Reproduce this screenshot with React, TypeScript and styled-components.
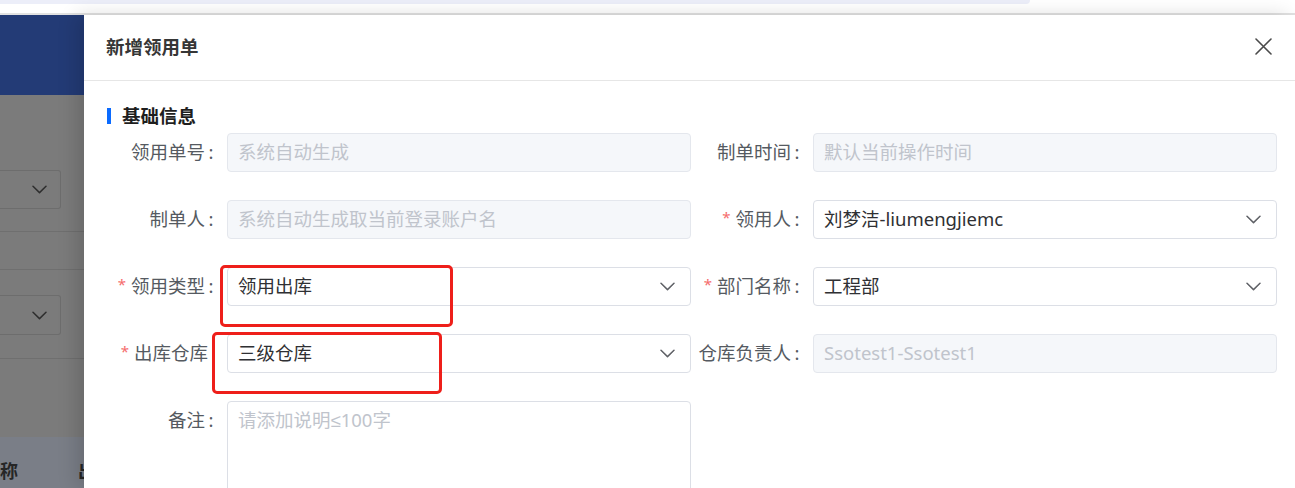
import React from "react";
import styled, { createGlobalStyle } from "styled-components";

const GlobalStyle = createGlobalStyle`
  html, body { margin: 0; padding: 0; background: #ffffff; }
  body {
    font-family: "Noto Sans", "Noto Sans CJK SC", sans-serif;
    -webkit-font-smoothing: antialiased;
  }
  * { box-sizing: border-box; }
`;

const Screen = styled.div`
  width: 1295px;
  height: 488px;
  overflow: hidden;
  display: flex;
  flex-direction: column;
  background: #ffffff;
`;

const BrowserStrip = styled.div`
  height: 15px;
  flex: none;
  background: #ffffff;
  border-bottom: 2px solid #e2e2e2;
`;

const AddressBar = styled.div`
  width: 1030px;
  height: 4px;
  background: #eceef9;
  border-bottom-right-radius: 14px;
`;

const Main = styled.div`
  flex: 1;
  display: flex;
  min-height: 0;
`;

const PageBehind = styled.div`
  width: 84px;
  flex: none;
  display: flex;
  flex-direction: column;
  background: #7b7b7b;
  overflow: hidden;
`;

const PageHeader = styled.div`
  height: 80px;
  flex: none;
  background: #233b76;
`;

const FilterSelect = styled.div<{ $top: number; $h: number }>`
  margin-top: ${(p) => p.$top}px;
  height: ${(p) => p.$h}px;
  width: 61px;
  border: 1px solid #6d6d6d;
  border-left: none;
  border-radius: 0 3px 3px 0;
  display: flex;
  align-items: center;
  justify-content: flex-end;
  padding-right: 13px;
  flex: none;
`;

const Divider = styled.div<{ $top: number }>`
  margin-top: ${(p) => p.$top}px;
  height: 1px;
  background: #6f6f6f;
  flex: none;
`;

const TableHead = styled.div`
  margin-top: 78px;
  flex: 1;
  background: #7a7e87;
  display: flex;
  align-items: flex-start;
  padding-top: 20px;
  gap: 60px;
  color: #262626;
  font-weight: 700;
  font-size: 18px;
  white-space: nowrap;
`;

const Drawer = styled.div`
  flex: 1;
  background: #ffffff;
  display: flex;
  flex-direction: column;
  box-shadow: -8px 0 18px rgba(0, 0, 0, 0.14);
  position: relative;
  z-index: 1;
`;

const DrawerHeader = styled.div`
  height: 66px;
  flex: none;
  border-bottom: 1px solid #e6e6e6;
  display: flex;
  align-items: center;
  justify-content: space-between;
  padding: 0 23px 0 22px;
`;

const Title = styled.div`
  font-size: 18.5px;
  font-weight: 700;
  color: #363636;
  margin-top: -3px;
`;

const CloseBtn = styled.button`
  border: none;
  background: transparent;
  padding: 0;
  width: 18px;
  height: 18px;
  display: flex;
  align-items: center;
  justify-content: center;
  cursor: pointer;
  margin-top: -3px;
`;

const DrawerBody = styled.div`
  position: relative;
  padding: 19px 18px 0 21px;
`;

const SectionTitle = styled.div`
  height: 30px;
  display: flex;
  align-items: center;
  gap: 11px;
  font-size: 18.5px;
  font-weight: 700;
  color: #1e1e1e;
  padding-left: 2px;
  padding-bottom: 1px;
  &::before {
    content: "";
    width: 4px;
    height: 16px;
    background: #0b6bff;
    display: block;
    margin-top: 2px;
  }
`;

const FormGrid = styled.div`
  margin-top: 3px;
  display: grid;
  grid-template-columns: 1fr 1fr;
  row-gap: 28px;
`;

const FormItem = styled.div`
  display: flex;
  align-items: flex-start;
`;

const Label = styled.label`
  width: 122px;
  flex: none;
  height: 39px;
  display: flex;
  align-items: center;
  justify-content: flex-end;
  padding-right: 10px;
  padding-bottom: 3px;
  font-size: 18.5px;
  color: #555a61;
  white-space: nowrap;
`;

const Star = styled.span`
  color: #f56c6c;
  font-size: 15px;
  margin-right: 5px;
  position: relative;
  top: -1px;
`;

const Colon = styled.span<{ $blank?: boolean }>`
  width: ${(p) => (p.$blank ? 9 : 12)}px;
  text-align: center;
  flex: none;
`;

const Field = styled.div<{ $disabled?: boolean }>`
  flex: 1;
  height: 39px;
  border: 1px solid ${(p) => (p.$disabled ? "#e4e7ed" : "#dcdfe6")};
  background: ${(p) => (p.$disabled ? "#f5f7fa" : "#ffffff")};
  border-radius: 4px;
  display: flex;
  align-items: center;
  padding: 0 15px 3px 10px;
  font-size: 18.5px;
  color: #303133;
  white-space: nowrap;
  overflow: hidden;
`;

const Placeholder = styled.span`
  color: #c0c4cc;
`;

const Symbol = styled.span`
  font-family: "Liberation Sans", sans-serif;
`;

const Value = styled.span`
  flex: 1;
  color: #2f3033;
`;

const ChevronSlot = styled.span`
  display: flex;
  align-items: center;
  padding-top: 3px;
`;

const TextArea = styled.div`
  flex: 1;
  height: 110px;
  border: 1px solid #dcdfe6;
  border-radius: 4px;
  padding: 5px 10px;
  font-size: 18.5px;
  line-height: 26px;
`;

const Annotation = styled.div<{ $left: number; $top: number; $w: number; $h: number }>`
  position: absolute;
  left: ${(p) => p.$left}px;
  top: ${(p) => p.$top}px;
  width: ${(p) => p.$w}px;
  height: ${(p) => p.$h}px;
  border: 3.5px solid #ee1f1a;
  border-radius: 5px;
  pointer-events: none;
`;

const Chevron = ({ color = "#5f6166" }: { color?: string }) => (
  <svg width="15" height="9" viewBox="0 0 15 9" fill="none">
    <path d="M1 1.2 L7.5 7.6 L14 1.2" stroke={color} strokeWidth="1.5" strokeLinecap="round" strokeLinejoin="round" />
  </svg>
);

const CloseIcon = () => (
  <svg width="17" height="17" viewBox="0 0 17 17" fill="none">
    <path d="M1 1 L16 16 M16 1 L1 16" stroke="#4a4a4a" strokeWidth="1.6" strokeLinecap="round" />
  </svg>
);

type ItemProps = {
  label: string;
  required?: boolean;
  noColon?: boolean;
  children: React.ReactNode;
};

const Item = ({ label, required, noColon, children }: ItemProps) => (
  <FormItem>
    <Label>
      {required && <Star>*</Star>}
      {label}
      <Colon $blank={noColon}>{noColon ? "" : ":"}</Colon>
    </Label>
    {children}
  </FormItem>
);

const SelectField = ({ value }: { value: string }) => (
  <Field>
    <Value>{value}</Value>
    <ChevronSlot>
      <Chevron />
    </ChevronSlot>
  </Field>
);

export default function App() {
  return (
    <>
      <GlobalStyle />
      <Screen>
        <BrowserStrip>
          <AddressBar />
        </BrowserStrip>
        <Main>
          <PageBehind>
            <PageHeader />
            <FilterSelect $top={75} $h={39}>
              <Chevron color="#2e2e2e" />
            </FilterSelect>
            <Divider $top={22} />
            <Divider $top={37} />
            <FilterSelect $top={25} $h={40}>
              <Chevron color="#2e2e2e" />
            </FilterSelect>
            <Divider $top={23} />
            <TableHead>
              <span>称</span>
              <span>出</span>
            </TableHead>
          </PageBehind>
          <Drawer>
            <DrawerHeader>
              <Title>新增领用单</Title>
              <CloseBtn aria-label="关闭">
                <CloseIcon />
              </CloseBtn>
            </DrawerHeader>
            <DrawerBody>
              <SectionTitle>基础信息</SectionTitle>
              <FormGrid>
                <Item label="领用单号">
                  <Field $disabled>
                    <Placeholder>系统自动生成</Placeholder>
                  </Field>
                </Item>
                <Item label="制单时间">
                  <Field $disabled>
                    <Placeholder>默认当前操作时间</Placeholder>
                  </Field>
                </Item>
                <Item label="制单人">
                  <Field $disabled>
                    <Placeholder>系统自动生成取当前登录账户名</Placeholder>
                  </Field>
                </Item>
                <Item label="领用人" required>
                  <SelectField value="刘梦洁-liumengjiemc" />
                </Item>
                <Item label="领用类型" required>
                  <SelectField value="领用出库" />
                </Item>
                <Item label="部门名称" required>
                  <SelectField value="工程部" />
                </Item>
                <Item label="出库仓库" required noColon>
                  <SelectField value="三级仓库" />
                </Item>
                <Item label="仓库负责人">
                  <Field $disabled>
                    <Placeholder>Ssotest1-Ssotest1</Placeholder>
                  </Field>
                </Item>
                <Item label="备注">
                  <TextArea>
                    <Placeholder>
                      请添加说明<Symbol>≤</Symbol>100字
                    </Placeholder>
                  </TextArea>
                </Item>
              </FormGrid>
              <Annotation $left={136} $top={184} $w={233} $h={62} />
              <Annotation $left={128} $top={251} $w={230} $h={62} />
            </DrawerBody>
          </Drawer>
        </Main>
      </Screen>
    </>
  );
}
